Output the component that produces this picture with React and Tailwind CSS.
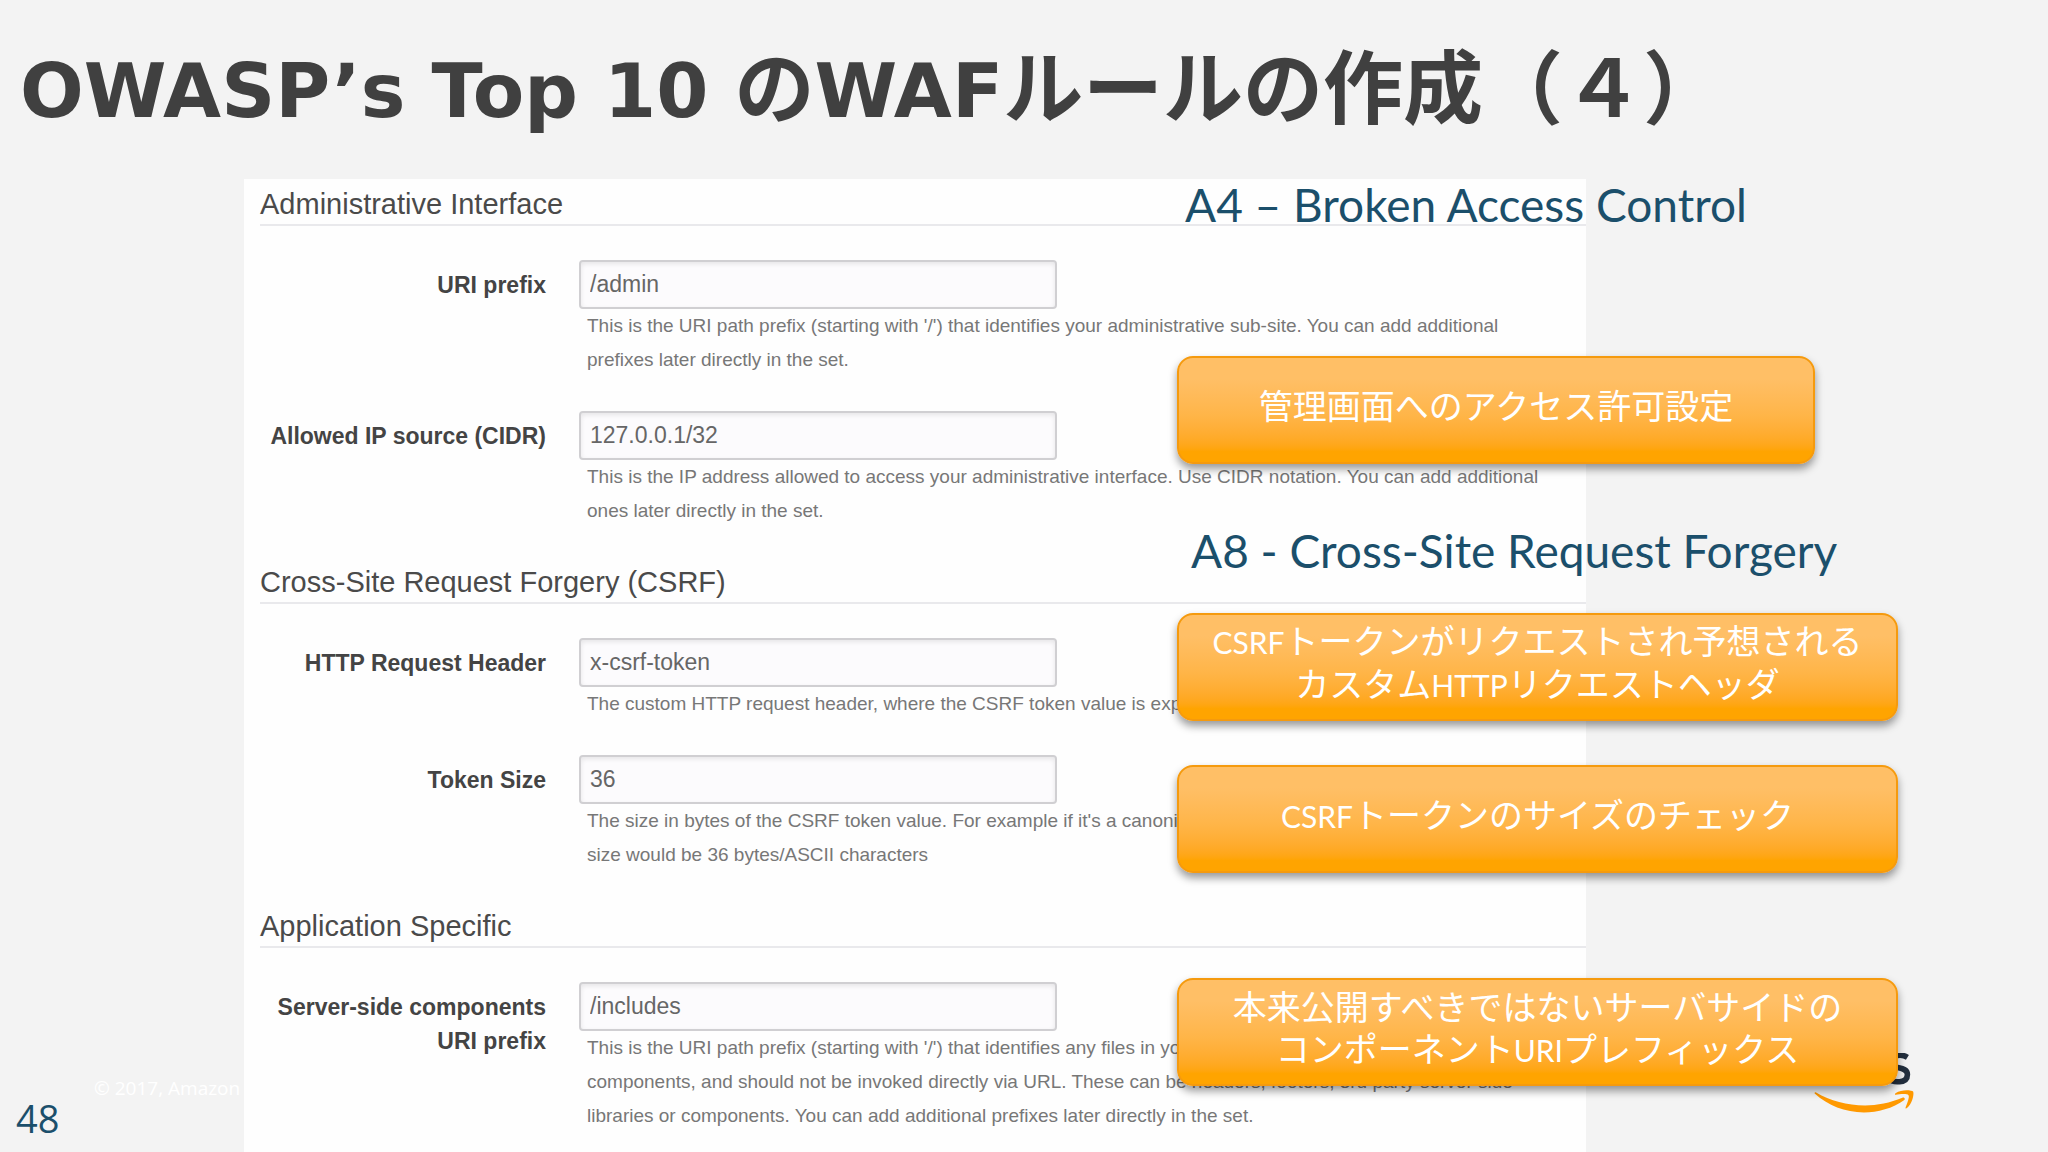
import React from 'react';
import clsx from 'clsx';

const sections = [
  {
    title: 'Administrative Interface',
    fields: [
      {
        id: 'uri-prefix',
        label: ['URI prefix'],
        value: '/admin',
        help: [
          "This is the URI path prefix (starting with '/') that identifies your administrative sub-site. You can add additional",
          'prefixes later directly in the set.',
        ],
      },
      {
        id: 'allowed-ip',
        label: ['Allowed IP source (CIDR)'],
        value: '127.0.0.1/32',
        help: [
          'This is the IP address allowed to access your administrative interface. Use CIDR notation. You can add additional',
          'ones later directly in the set.',
        ],
      },
    ],
  },
  {
    title: 'Cross-Site Request Forgery (CSRF)',
    fields: [
      {
        id: 'http-header',
        label: ['HTTP Request Header'],
        value: 'x-csrf-token',
        help: ['The custom HTTP request header, where the CSRF token value is expected'],
      },
      {
        id: 'token-size',
        label: ['Token Size'],
        value: '36',
        help: [
          "The size in bytes of the CSRF token value. For example if it's a canonical",
          'size would be 36 bytes/ASCII characters',
        ],
      },
    ],
  },
  {
    title: 'Application Specific',
    fields: [
      {
        id: 'includes-prefix',
        label: ['Server-side components', 'URI prefix'],
        value: '/includes',
        help: [
          "This is the URI path prefix (starting with '/') that identifies any files in your",
          'components, and should not be invoked directly via URL. These can be headers, footers, 3rd party server side',
          'libraries or components. You can add additional prefixes later directly in the set.',
        ],
      },
    ],
  },
];

const Field = ({ id, label, value, help }) => (
  <div className="flex gap-[33px]">
    <label
      htmlFor={id}
      className="w-[286px] shrink-0 pt-2 text-right text-[23px] leading-[34px] font-bold text-[#444]"
    >
      {label.map((line) => (
        <span key={line} className="block whitespace-nowrap">{line}</span>
      ))}
    </label>
    <div className="min-w-0 flex-1">
      <input
        id={id}
        type="text"
        defaultValue={value}
        className="block h-[49px] w-[478px] rounded-[4px] border-2 border-[#d0cfd2] bg-[#fcfbfd] px-[9px] text-[23px] text-[#666] shadow-[inset_0_2px_5px_rgba(0,0,0,0.09)]"
      />
      <p className="pl-2 text-[19px] leading-[34px] text-[#777]">
        {help.map((line) => (
          <span key={line} className="block whitespace-nowrap">{line}</span>
        ))}
      </p>
    </div>
  </div>
);

const Section = ({ title, fields }) => (
  <section>
    <h2 className="mb-[34px] border-b-2 border-[#e9e9ec] pb-[2px] text-[29px] leading-9 text-[#4a4a4a]">
      {title}
    </h2>
    <div className="flex flex-col gap-[34px]">
      {fields.map((field) => (
        <Field key={field.id} {...field} />
      ))}
    </div>
  </section>
);

const Topic = ({ className, children }) => (
  <h3 className={clsx('text-[46px] leading-[52px] whitespace-nowrap text-[#1b4f6b]', className)}>
    {children}
  </h3>
);

const Callout = ({ className, lines }) => (
  <div
    className={clsx(
      'flex h-27 flex-col justify-center rounded-[16px] border-2 border-[#f59a0e] bg-linear-to-b from-[#ffbf66] from-20% via-[#ffb548] via-55% to-[#ffa400] to-90% pb-2 text-center text-[34px] leading-[42px] text-white shadow-[0_5px_8px_rgba(0,0,0,0.4)]',
      className
    )}
  >
    {lines.map((line) => (
      <p key={line} className="whitespace-nowrap">
        {/* Latin words are set smaller than the kana around them */}
        {line.split(/([A-Z]+)/).map((part, i) =>
          i % 2 ? <span key={i} className="text-[30px]">{part}</span> : part
        )}
      </p>
    ))}
  </div>
);

const AwsLogo = () => (
  <svg viewBox="0 0 304 182" className="w-[100px]" role="img" aria-label="aws">
    <path
      d="M284 13 C268 3 233 4 233 27 C233 53 284 37 284 65 C284 94 240 91 224 78"
      fill="none"
      stroke="#232f3e"
      strokeWidth="17"
    />
    <g fill="#ff9900">
      <path d="M273.5,143.7c-32.9,24.3-80.7,37.2-121.8,37.2c-57.6,0-109.5-21.3-148.7-56.7c-3.1-2.8-0.3-6.6,3.4-4.4c42.4,24.6,94.7,39.5,148.8,39.5c36.5,0,76.6-7.6,113.5-23.2C274.2,133.6,278.9,139.7,273.5,143.7z" />
      <path d="M287.2,128.1c-4.2-5.4-27.8-2.6-38.5-1.3c-3.2,0.4-3.7-2.4-0.8-4.5c18.8-13.2,49.7-9.4,53.3-5c3.6,4.5-1,35.4-18.6,50.2c-2.7,2.3-5.3,1.1-4.1-1.9C282.5,155.7,291.4,133.4,287.2,128.1z" />
    </g>
  </svg>
);

const App = () => (
  <div className="flex min-h-screen flex-col overflow-hidden bg-[#f3f3f3]">
    <h1 className="h-[179px] px-5 pt-[22px] text-[80px] leading-[120px] font-bold whitespace-nowrap text-[#404040] font-['Noto_Sans_CJK_JP',sans-serif]">
      <span className="text-[75px] leading-none font-['DejaVu_Sans',sans-serif]">OWASP’s Top 10 </span>の
      <span className="text-[75px] leading-none font-['DejaVu_Sans',sans-serif]">WAF</span>ルールの作成（４）
    </h1>

    <div className="flex flex-1">
      {/* Slide number and copyright */}
      <footer className="flex w-[244px] shrink-0 flex-col justify-end overflow-hidden pb-4 pl-4 font-['Open_Sans',sans-serif]">
        <p className="pl-[78px] text-[19px] leading-6 whitespace-nowrap text-white">
          © 2017, Amazon
        </p>
        <p className="text-[38px] leading-9 text-[#1b4f6b]">48</p>
      </footer>

      <main className="relative flex min-w-0 flex-1 flex-col gap-9 bg-[#fefefe] pt-[7px] pl-4 font-['Liberation_Sans',Arial,sans-serif]">
        {sections.map((section) => (
          <Section key={section.title} {...section} />
        ))}

        {/* Notes laid over the form */}
        <div className="absolute top-0 left-[933px] z-10 w-[721px] font-['Lato','Noto_Sans_CJK_JP',sans-serif]">
          <Topic className="pl-2">A4 – Broken Access Control</Topic>
          <Callout className="mt-[125px] w-[638px]" lines={['管理画面へのアクセス許可設定']} />
          <Topic className="mt-[61px] pl-[14px]">A8 - Cross-Site Request Forgery</Topic>
          <Callout
            className="mt-9"
            lines={['CSRFトークンがリクエストされ予想される', 'カスタムHTTPリクエストヘッダ']}
          />
          <Callout className="mt-11" lines={['CSRFトークンのサイズのチェック']} />
          <Callout
            className="mt-[105px]"
            lines={['本来公開すべきではないサーバサイドの', 'コンポーネントURIプレフィックス']}
          />
        </div>
      </main>

      <div className="flex w-[462px] shrink-0 items-end pb-[39px] pl-[228px]">
        <AwsLogo />
      </div>
    </div>
  </div>
);

export default App;
